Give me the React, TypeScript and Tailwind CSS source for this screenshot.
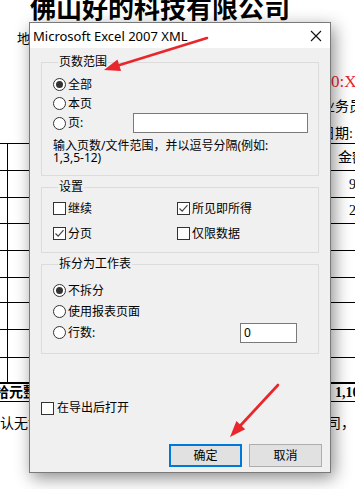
import React from 'react';

const ui = "font-['Segoe_UI','Noto_Sans','Noto_Sans_CJK_SC',sans-serif]";
const doc = "font-['Liberation_Serif','Noto_Sans_CJK_SC',serif]";

const Radio = ({ checked }: { checked?: boolean }) => (
  <span className="w-[13px] h-[13px] shrink-0 rounded-full border border-[#333] bg-white flex items-center justify-center">
    {checked && <span className="w-[7px] h-[7px] rounded-full bg-[#333]" />}
  </span>
);

const Check = ({ checked }: { checked?: boolean }) => (
  <span className="w-[13px] h-[13px] shrink-0 border border-[#333] bg-white flex items-center justify-center">
    {checked && (
      <svg width="11" height="11" viewBox="0 0 11 11">
        <path d="M1.5 5.5 L4.2 8.2 L9.5 2.2" stroke="#444" strokeWidth="1.2" fill="none" />
      </svg>
    )}
  </span>
);

const Group = ({ title, className, children }: { title: string; className?: string; children: React.ReactNode }) => (
  <fieldset className={`w-[278px] border border-[#dcdcdc] pl-[11px] pr-[10px] ${className}`}>
    <legend className="ml-[5px] px-[1px] text-[12px] leading-[14px] text-black">{title}</legend>
    {children}
  </fieldset>
);

// table rows behind the dialog: [height, right text, right padding]
const rows: [string, string, string][] = [
  ['h-[27px]', '金额', 'pl-[330px]'],
  ['h-[27px]', '9', 'pl-[341px]'],
  ['h-[26px]', '2', 'pl-[341px]'],
  ['h-[27px]', '', ''],
  ['h-[27px]', '', ''],
  ['h-[25px]', '', ''],
  ['h-[27px]', '', ''],
  ['h-[28px]', '', ''],
  ['h-[25px]', '', ''],
];

const App = () => {
  return (
    <div className={`relative w-[355px] h-[489px] overflow-hidden bg-white text-black ${doc}`}>
      {/* Document behind the dialog */}
      <div className="-mt-[3px] h-[24px] pl-[30px] text-[26px] leading-[26px] font-bold whitespace-nowrap">
        佛山好的科技有限公司
      </div>
      <div className="mt-[11px] h-[14px] pl-[17px] text-[13px] leading-[14px] whitespace-nowrap">地址：</div>
      <div className="mt-[26px] h-[20px] pl-[331px] text-[17px] leading-[20px] text-[#e8262b] whitespace-nowrap">0:XS</div>
      <div className="mt-[7px] h-[16px] pl-[321px] text-[14px] leading-[16px] whitespace-nowrap">业务员</div>
      <div className="mt-[11px] h-[16px] pl-[321px] text-[14px] leading-[16px] whitespace-nowrap">日期:</div>
      <div className="mt-[1px]">
        {rows.map(([h, text, pl], i) => (
          <div key={i} className={`flex border-t border-black ${h}`}>
            <div className="w-[8px] shrink-0 border-r border-black" />
            <div className={`flex items-center text-[14px] whitespace-nowrap ${pl}`}>{text}</div>
          </div>
        ))}
        <div className="flex h-[20px] items-center border-t-2 border-b border-black text-[14px] font-bold whitespace-nowrap">
          <span className="-ml-[5px]">拾元整</span>
          <span className="ml-auto mr-[-30px] w-[50px]">1,100.00</span>
        </div>
        <div className="mt-[13px] flex h-[16px] items-center text-[14px] whitespace-nowrap">
          <span>认无误</span>
          <span className="ml-auto mr-[-6px] w-[34px]">司，月</span>
        </div>
      </div>

      {/* Export dialog */}
      <div
        className={`absolute left-[29px] top-[22px] w-[302px] h-[451px] border border-[#7a7a7a] bg-[#f0f0f0] shadow-[3px_5px_16px_rgba(0,0,0,0.45)] flex flex-col text-[12px] leading-[14px] ${ui}`}
      >
        <div className="h-[25px] shrink-0 bg-white flex items-center pl-[3px] pr-[8px]">
          <span className="text-[13px]">Microsoft Excel 2007 XML</span>
          <svg className="ml-auto" width="12" height="12" viewBox="0 0 12 12">
            <path d="M1 1 L11 11 M11 1 L1 11" stroke="#111" strokeWidth="1.1" />
          </svg>
        </div>

        <div className="pl-[11px] pr-[9px] flex flex-col">
          <Group title="页数范围" className="mt-[7px] h-[121px]">
            <div className="pt-[6px] flex flex-col">
              <label className="h-[19px] flex items-center gap-[2px]">
                <Radio checked />
                <span>全部</span>
              </label>
              <label className="h-[19px] flex items-center gap-[2px]">
                <Radio />
                <span>本页</span>
              </label>
              <label className="h-[20px] flex items-center gap-[2px]">
                <Radio />
                <span>页:</span>
                <span className="ml-auto w-[175px] h-[20px] border border-[#7a7a7a] bg-white" />
              </label>
              <p className="mt-[7px] leading-[12px]">
                输入页数/文件范围，并以逗号分隔(例如:
                <br />
                1,3,5-12)
              </p>
            </div>
          </Group>

          <Group title="设置" className="mt-[4px] h-[73px]">
            <div className="pt-[2px] grid grid-cols-[124px_1fr]">
              <label className="h-[25px] flex items-center gap-[2px]">
                <Check />
                <span>继续</span>
              </label>
              <label className="h-[25px] flex items-center gap-[2px]">
                <Check checked />
                <span>所见即所得</span>
              </label>
              <label className="h-[25px] flex items-center gap-[2px]">
                <Check checked />
                <span>分页</span>
              </label>
              <label className="h-[25px] flex items-center gap-[2px]">
                <Check />
                <span>仅限数据</span>
              </label>
            </div>
          </Group>

          <Group title="拆分为工作表" className="mt-[4px] h-[97px]">
            <div className="pt-[9px] flex flex-col">
              <label className="h-[21px] flex items-center gap-[2px]">
                <Radio checked />
                <span>不拆分</span>
              </label>
              <label className="h-[21px] flex items-center gap-[2px]">
                <Radio />
                <span>使用报表页面</span>
              </label>
              <label className="h-[21px] flex items-center gap-[2px]">
                <Radio />
                <span>行数:</span>
                <span className="ml-auto mr-[11px] w-[57px] h-[20px] border border-[#7a7a7a] bg-white flex items-center pl-[3px]">
                  0
                </span>
              </label>
            </div>
          </Group>

          <label className="mt-[47px] h-[14px] flex items-center gap-[3px]">
            <Check />
            <span>在导出后打开</span>
          </label>

          <div className="mt-[29px] flex justify-end gap-[7px] -mr-[1px]">
            <button className="w-[73px] h-[23px] border-2 border-[#0078d7] bg-[#e1e1e1] text-[12px]">确定</button>
            <button className="w-[73px] h-[23px] border border-[#adadad] bg-[#e1e1e1] text-[12px]">取消</button>
          </div>
        </div>
      </div>

      {/* Red annotation arrows */}
      <svg className="absolute left-0 top-0 pointer-events-none" width="355" height="489" viewBox="0 0 355 489">
        <path d="M207 38 L118 65.5" stroke="#e8262b" strokeWidth="2.6" strokeLinecap="round" />
        <polygon points="104,70 117.5,59.6 121.1,71" fill="#e8262b" />
        <path d="M278 385 L240 426" stroke="#e8262b" strokeWidth="2.6" strokeLinecap="round" />
        <polygon points="230,437 236.4,421.1 245.2,429.3" fill="#e8262b" />
      </svg>
    </div>
  );
};

export default App;
